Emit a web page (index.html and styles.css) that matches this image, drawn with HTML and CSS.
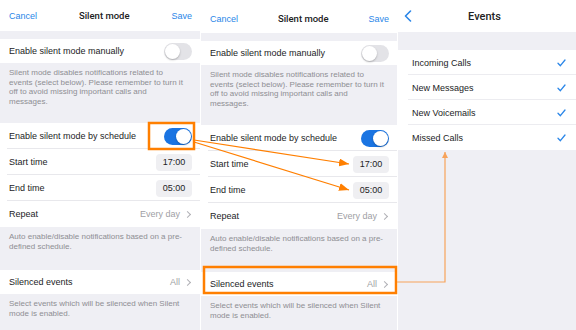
FILE: index.html
```html
<!DOCTYPE html>
<html lang="en">
<head>
  <meta charset="UTF-8" />
  <title>Silent mode</title>
  <link rel="stylesheet" href="styles.css">
</head>
<body>

  <!-- Screen 1: Silent mode -->
  <div class="phone phone-a">
    <div class="nav">
      <span class="nav-link">Cancel</span>
      <span class="nav-title">Silent mode</span>
      <span class="nav-link">Save</span>
    </div>
    <div class="group first">
      <div class="row"><span>Enable silent mode manually</span><span class="toggle"></span></div>
    </div>
    <p class="note">Silent mode disables notifications related to<br>events (select below). Please remember to turn it<br>off to avoid missing important calls and<br>messages.</p>
    <div class="group sched">
      <div class="row tall line"><span>Enable silent mode by schedule</span><span class="toggle on"></span></div>
      <div class="row tall line"><span>Start time</span><span class="pill">17:00</span></div>
      <div class="row tall line"><span>End time</span><span class="pill">05:00</span></div>
      <div class="row tall"><span>Repeat</span><span class="value">Every day <i class="chev"></i></span></div>
    </div>
    <p class="note">Auto enable/disable notifications based on a pre-<br>defined schedule.</p>
    <div class="group events">
      <div class="row"><span>Silenced events</span><span class="value">All <i class="chev"></i></span></div>
    </div>
    <p class="note">Select events which will be silenced when Silent<br>mode is enabled.</p>
  </div>

  <!-- Screen 2: same screen, shifted a little -->
  <div class="phone phone-b">
    <div class="nav">
      <span class="nav-link">Cancel</span>
      <span class="nav-title">Silent mode</span>
      <span class="nav-link">Save</span>
    </div>
    <div class="group first">
      <div class="row"><span>Enable silent mode manually</span><span class="toggle"></span></div>
    </div>
    <p class="note">Silent mode disables notifications related to<br>events (select below). Please remember to turn it<br>off to avoid missing important calls and<br>messages.</p>
    <div class="group sched">
      <div class="row tall line"><span>Enable silent mode by schedule</span><span class="toggle on"></span></div>
      <div class="row tall line"><span>Start time</span><span class="pill">17:00</span></div>
      <div class="row tall line"><span>End time</span><span class="pill">05:00</span></div>
      <div class="row tall"><span>Repeat</span><span class="value">Every day <i class="chev"></i></span></div>
    </div>
    <p class="note">Auto enable/disable notifications based on a pre-<br>defined schedule.</p>
    <div class="group events">
      <div class="row"><span>Silenced events</span><span class="value">All <i class="chev"></i></span></div>
    </div>
    <p class="note">Select events which will be silenced when Silent<br>mode is enabled.</p>
  </div>

  <!-- Screen 3: Events -->
  <div class="phone phone-c">
    <div class="nav nav-events">
      <svg class="back" width="8" height="12" viewBox="0 0 8 12"><path d="M6.5 1 L1.5 6 L6.5 11" fill="none" stroke="#2a86e8" stroke-width="1.6" stroke-linecap="round" stroke-linejoin="round"/></svg>
      <span class="nav-title big">Events</span>
    </div>
    <div class="list">
      <div class="item"><span>Incoming Calls</span><svg class="check" width="9" height="8" viewBox="0 0 9 8"><path d="M1 4.3 L3.4 6.7 L8 1" fill="none" stroke="#2a86e8" stroke-width="1.3" stroke-linecap="round" stroke-linejoin="round"/></svg></div>
      <div class="item"><span>New Messages</span><svg class="check" width="9" height="8" viewBox="0 0 9 8"><path d="M1 4.3 L3.4 6.7 L8 1" fill="none" stroke="#2a86e8" stroke-width="1.3" stroke-linecap="round" stroke-linejoin="round"/></svg></div>
      <div class="item"><span>New Voicemails</span><svg class="check" width="9" height="8" viewBox="0 0 9 8"><path d="M1 4.3 L3.4 6.7 L8 1" fill="none" stroke="#2a86e8" stroke-width="1.3" stroke-linecap="round" stroke-linejoin="round"/></svg></div>
      <div class="item"><span>Missed Calls</span><svg class="check" width="9" height="8" viewBox="0 0 9 8"><path d="M1 4.3 L3.4 6.7 L8 1" fill="none" stroke="#2a86e8" stroke-width="1.3" stroke-linecap="round" stroke-linejoin="round"/></svg></div>
    </div>
  </div>

  <!-- Annotation overlay -->
  <svg class="marks" width="576" height="330" viewBox="0 0 576 330">
    <defs>
      <marker id="head" markerUnits="userSpaceOnUse" markerWidth="10" markerHeight="8" refX="10" refY="4" orient="auto">
        <path d="M0 0 L10 4 L0 8 z" fill="#ff7f00"/>
      </marker>
      <marker id="headLight" markerUnits="userSpaceOnUse" markerWidth="6" markerHeight="6" refX="6" refY="3" orient="auto">
        <path d="M0 0 L6 3 L0 6 z" fill="#f7a35a"/>
      </marker>
    </defs>
    <rect x="149" y="123" width="45" height="26" fill="none" stroke="#ff7f00" stroke-width="2.5"/>
    <line x1="194" y1="140" x2="349" y2="164" stroke="#ff7f00" stroke-width="1.2" marker-end="url(#head)"/>
    <line x1="194" y1="142" x2="349" y2="190" stroke="#ff7f00" stroke-width="1.2" marker-end="url(#head)"/>
    <rect x="204" y="267" width="192" height="26" fill="none" stroke="#ff7f00" stroke-width="2.5"/>
    <polyline points="397,282 445,282 445,152" fill="none" stroke="#f7a35a" stroke-width="1.2" marker-end="url(#headLight)"/>
  </svg>

</body>
</html>
```

FILE: styles.css
```css
* {
  box-sizing: border-box;
  margin: 0;
  padding: 0;
}

body {
  position: relative;
  width: 576px;
  height: 330px;
  overflow: hidden;
  display: flex;
  gap: 1px;
  background: #fff;
  font-family: 'Liberation Sans', Arial, sans-serif;
  color: #1c1c1e;
}

.phone {
  background: #efeff4;
  height: 330px;
  display: flex;
  flex-direction: column;
}

.phone-a { width: 200px; }
.phone-b { width: 196px; padding-top: 2px; }
.phone-c { flex: 1; }

.nav {
  height: 31px;
  background: #fff;
  display: flex;
  align-items: center;
  justify-content: space-between;
  padding: 0 8px 0 9px;
  font-size: 9px;
}

.phone-b .nav { margin-top: -2px; height: 33px; padding-top: 4px; }

.nav-link {
  color: #2a86e8;
}

.nav-title {
  font-family: Roboto, 'Liberation Sans', sans-serif;
  font-weight: 500;
  font-size: 9.5px;
  color: #222;
}

.nav-events {
  position: relative;
  justify-content: center;
  height: 32px;
}

.nav-events .back {
  position: absolute;
  left: 6px;
  top: 10px;
}

.nav-title.big {
  font-size: 11px;
  margin-left: -6px;
}

.group {
  background: #fff;
}

.group.first { margin-top: 8px; }

.row {
  height: 24px;
  display: flex;
  align-items: center;
  justify-content: space-between;
  padding: 0 8px 0 9px;
  font-size: 9px;
  position: relative;
}

.row.tall { height: 26px; }

.row.line::after {
  content: '';
  position: absolute;
  left: 7px;
  right: 0;
  bottom: 0;
  border-bottom: 1px solid #e8e8ec;
}

.toggle {
  width: 28px;
  height: 17px;
  border-radius: 9px;
  background: #e3e3e7;
  position: relative;
}

.toggle::after {
  content: '';
  position: absolute;
  left: 1px;
  top: 1px;
  width: 15px;
  height: 15px;
  border-radius: 50%;
  background: #fff;
  box-shadow: 0 1px 2px rgba(0, 0, 0, 0.25);
}

.toggle.on { background: #1a74e2; }
.toggle.on::after { left: 12px; }

.pill {
  width: 36px;
  height: 17px;
  border-radius: 4px;
  background: #efeff2;
  display: flex;
  align-items: center;
  justify-content: center;
  font-size: 9px;
}

.value {
  color: #a0a0a5;
  display: flex;
  align-items: center;
  gap: 5px;
}

.chev {
  width: 5px;
  height: 5px;
  border-top: 1px solid #b0b0b5;
  border-right: 1px solid #b0b0b5;
  transform: rotate(45deg);
  margin-right: 2px;
}

.note {
  font-size: 8px;
  line-height: 9.7px;
  color: #8e8e93;
  padding: 5px 9px 0;
  white-space: nowrap;
}

.phone .note:nth-of-type(1) { height: 60px; }
.phone .note:nth-of-type(2) { height: 43px; }

.list {
  margin-top: 18px;
  background: #fff;
}

.item {
  height: 25px;
  display: flex;
  align-items: center;
  justify-content: space-between;
  margin-left: 10px;
  padding: 1px 10px 0 4px;
  font-size: 9px;
  border-bottom: 1px solid #ececf0;
}

.item:last-child { border-bottom: none; }

.marks {
  position: absolute;
  top: 0;
  left: 0;
  pointer-events: none;
}
```
